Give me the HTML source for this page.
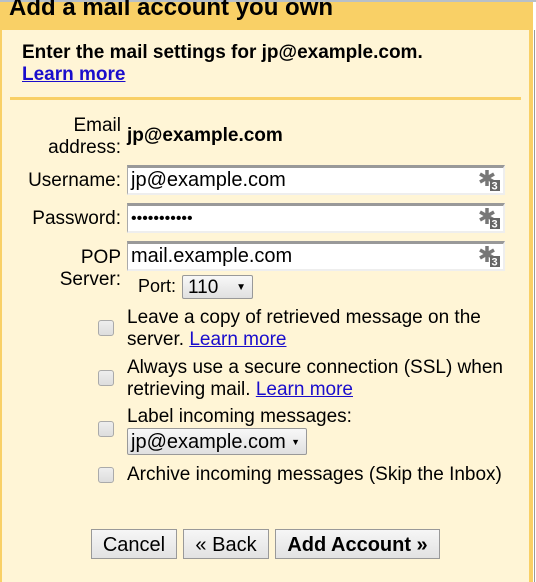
<!DOCTYPE html>
<html><head><style>
body{margin:0;width:536px;height:582px;overflow:hidden;background:#fff;font-family:"Liberation Sans",sans-serif;color:#000;position:relative}
.a{position:absolute}
.lbl{position:absolute;text-align:right;font-size:19px;line-height:22px;right:415px}
.inp{position:absolute;left:127px;width:372px;height:25px;background:#fff;border-top:3px solid #999;border-left:1px solid #aaa;border-right:2px solid #eee;border-bottom:2px solid #eee;font-size:20px;line-height:25px;padding-left:3px;box-sizing:content-box}
.ic{position:absolute;right:3px;top:0px;width:22px;height:24px}
.cb{position:absolute;left:98px;width:14px;height:14px;border:1px solid #aaa;border-radius:3px;background:linear-gradient(#eee,#ddd)}
.t{position:absolute;left:127px;font-size:19px;line-height:22px}
a{color:#1a0dcc;text-decoration:underline}
.btn{position:absolute;top:529px;height:30px;border:1px solid #999;background:linear-gradient(#f6f6f6,#e2e2e2);font-size:20px;line-height:30px;text-align:center;box-sizing:border-box}
</style></head><body>
<div class="a" style="left:0;top:0;width:536px;height:2px;background:#b8c0c8"></div>
<div class="a" style="left:0;top:2px;width:533px;height:580px;background:#f9d066"></div>
<div class="a" style="left:534px;top:30px;width:1px;height:552px;background:#999"></div>
<div class="a" style="left:2px;top:30px;width:527px;height:552px;background:#fff5d6"></div>
<div class="a" style="left:9px;top:-7px;font-size:24px;font-weight:bold;line-height:30px">Add a mail account you own</div>
<div class="a" style="left:22px;top:42px;font-size:19px;font-weight:bold;line-height:22px">Enter the mail settings for jp@example.com.<br><a href="#">Learn more</a></div>
<div class="a" style="left:10px;top:97px;width:511px;height:3px;background:#f9d066"></div>

<div class="lbl" style="top:115px">Email<br>address:</div>
<div class="a" style="left:127px;top:125px;font-size:19px;font-weight:bold">jp@example.com</div>

<div class="lbl" style="top:170px">Username:</div>
<div class="inp" style="top:165px">jp@example.com<svg class="ic" viewBox="0 0 22 24"><g stroke="#777" stroke-width="3.5"><line x1="9" y1="2" x2="9" y2="18"/><line x1="2" y1="6" x2="16" y2="14"/><line x1="2" y1="14" x2="16" y2="6"/></g><rect x="12" y="12" width="10" height="11" fill="#666"/><text x="13.5" y="21.5" font-size="11" fill="#fff" font-weight="bold" font-family="Liberation Sans">3</text></svg></div>

<div class="lbl" style="top:208px">Password:</div>
<div class="inp" style="top:203px;font-size:16px">•••••••••••<svg class="ic" viewBox="0 0 22 24"><g stroke="#777" stroke-width="3.5"><line x1="9" y1="2" x2="9" y2="18"/><line x1="2" y1="6" x2="16" y2="14"/><line x1="2" y1="14" x2="16" y2="6"/></g><rect x="12" y="12" width="10" height="11" fill="#666"/><text x="13.5" y="21.5" font-size="11" fill="#fff" font-weight="bold" font-family="Liberation Sans">3</text></svg></div>

<div class="lbl" style="top:247px">POP<br>Server:</div>
<div class="inp" style="top:241px">mail.example.com<svg class="ic" viewBox="0 0 22 24"><g stroke="#777" stroke-width="3.5"><line x1="9" y1="2" x2="9" y2="18"/><line x1="2" y1="6" x2="16" y2="14"/><line x1="2" y1="14" x2="16" y2="6"/></g><rect x="12" y="12" width="10" height="11" fill="#666"/><text x="13.5" y="21.5" font-size="11" fill="#fff" font-weight="bold" font-family="Liberation Sans">3</text></svg></div>

<div class="a" style="left:138px;top:276px;font-size:18px">Port:</div>
<div class="a" style="left:182px;top:275px;width:71px;height:24px;border:1px solid #999;border-radius:2px;background:linear-gradient(#f8f8f8,#e0e0e0);font-size:19px;line-height:23px;padding-left:5px;box-sizing:border-box">110<span style="position:absolute;right:6px;font-size:10px">▼</span></div>

<div class="cb" style="top:320px"></div>
<div class="t" style="top:307px">Leave a copy of retrieved message on the<br>server. <a href="#">Learn more</a></div>
<div class="cb" style="top:370px"></div>
<div class="t" style="top:357px">Always use a secure connection (SSL) when<br>retrieving mail. <a href="#">Learn more</a></div>
<div class="cb" style="top:421px"></div>
<div class="t" style="top:406px">Label incoming messages:</div>
<div class="a" style="left:127px;top:428px;width:180px;height:27px;border:1px solid #999;border-radius:2px;background:linear-gradient(#f8f8f8,#e0e0e0);font-size:20px;line-height:26px;padding-left:3px;box-sizing:border-box">jp@example.com<span style="position:absolute;right:6px;font-size:9px">▼</span></div>
<div class="cb" style="top:467px"></div>
<div class="t" style="top:464px">Archive incoming messages (Skip the Inbox)</div>

<div class="btn" style="left:91px;width:86px">Cancel</div>
<div class="btn" style="left:183px;width:86px">« Back</div>
<div class="btn" style="left:275px;width:165px;font-weight:bold">Add Account »</div>
</body></html>
